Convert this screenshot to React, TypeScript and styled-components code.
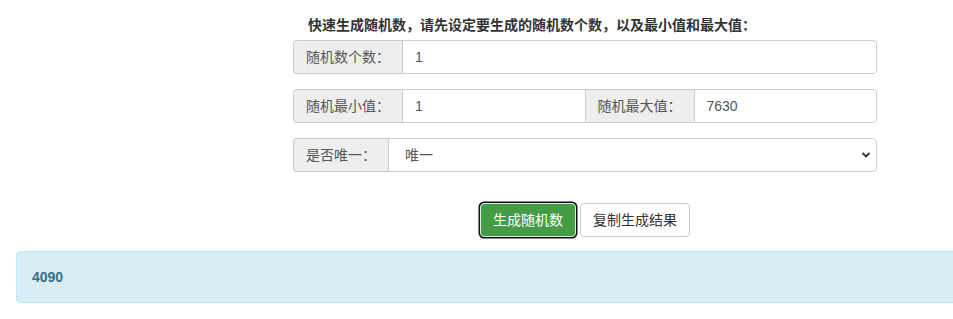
import React from "react";
import styled, { createGlobalStyle, css } from "styled-components";

const GlobalStyle = createGlobalStyle`
  html, body {
    margin: 0;
    padding: 0;
    background: #fff;
    overflow: hidden;
  }
  body {
    font-family: "Liberation Sans", "Noto Sans CJK SC", sans-serif;
    font-size: 14px;
    line-height: 20px;
    color: #333;
  }
  * {
    box-sizing: border-box;
  }
`;

const Page = styled.div`
  width: 1000px;
  padding-top: 15px;
`;

const FormColumn = styled.div`
  margin-left: 293px;
  width: 584px;
`;

const Title = styled.div`
  padding-left: 15px;
  font-weight: bold;
  font-size: 14px;
  line-height: 20px;
  color: #333;
  margin-bottom: 5px;
`;

const InputGroup = styled.div`
  display: flex;
  height: 34px;
  margin-bottom: 15px;
`;

const Addon = styled.span<{ $first?: boolean }>`
  flex: none;
  display: flex;
  align-items: center;
  padding: 6px 12px;
  background: #eee;
  color: #555;
  border: 1px solid #ccc;
  border-right: none;
  ${(p) =>
    p.$first
      ? css`
          border-radius: 4px 0 0 4px;
        `
      : css`
          border-left: none;
        `}
`;

const inputStyles = css`
  flex: 1 1 0;
  min-width: 0;
  height: 34px;
  padding: 6px 12px;
  border: 1px solid #ccc;
  color: #555;
  font-family: inherit;
  font-size: 14px;
  background: #fff;
  outline: none;
`;

const Input = styled.input<{ $last?: boolean }>`
  ${inputStyles}
  border-radius: ${(p) => (p.$last ? "0 4px 4px 0" : "0")};
`;

const SelectWrap = styled.div`
  position: relative;
  flex: 1 1 0;
  display: flex;
`;

const Select = styled.select`
  ${inputStyles}
  appearance: none;
  border-radius: 0 4px 4px 0;
  padding-left: 16px;
`;

const Chevron = styled.svg`
  position: absolute;
  right: 6px;
  top: 13px;
  pointer-events: none;
`;

const ButtonRow = styled.div`
  display: flex;
  justify-content: center;
  gap: 4px;
  padding-top: 16px;
  margin-bottom: 14px;
`;

const Button = styled.button<{ $primary?: boolean }>`
  height: 34px;
  padding: 6px 12px;
  font-family: inherit;
  font-size: 14px;
  line-height: 20px;
  border-radius: 4px;
  cursor: pointer;
  ${(p) =>
    p.$primary
      ? css`
          background: #449d44;
          color: #fff;
          border: 1px solid #dfe9df;
          box-shadow: 0 0 0 1.5px #101010;
        `
      : css`
          background: #fff;
          color: #333;
          border: 1px solid #ccc;
        `}
`;

const Alert = styled.div`
  margin-left: 16px;
  height: 52px;
  padding: 15px;
  background: #d9edf7;
  border: 1px solid #bce8f1;
  border-radius: 4px;
  color: #31708f;
  font-weight: bold;
`;

export default function App() {
  return (
    <>
      <GlobalStyle />
      <Page>
        <FormColumn>
          <Title>快速生成随机数，请先设定要生成的随机数个数，以及最小值和最大值：</Title>
          <InputGroup>
            <Addon $first>随机数个数：</Addon>
            <Input $last defaultValue="1" />
          </InputGroup>
          <InputGroup>
            <Addon $first>随机最小值：</Addon>
            <Input defaultValue="1" />
            <Addon>随机最大值：</Addon>
            <Input $last defaultValue="7630" />
          </InputGroup>
          <InputGroup>
            <Addon $first>是否唯一：</Addon>
            <SelectWrap>
              <Select defaultValue="unique">
                <option value="unique">唯一</option>
                <option value="repeat">可重复</option>
              </Select>
              <Chevron width="10" height="8" viewBox="0 0 10 8">
                <path
                  d="M1.5 2 L5 5.5 L8.5 2"
                  fill="none"
                  stroke="#333"
                  strokeWidth="1.8"
                />
              </Chevron>
            </SelectWrap>
          </InputGroup>
          <ButtonRow>
            <Button $primary>生成随机数</Button>
            <Button>复制生成结果</Button>
          </ButtonRow>
        </FormColumn>
        <Alert>4090</Alert>
      </Page>
    </>
  );
}
